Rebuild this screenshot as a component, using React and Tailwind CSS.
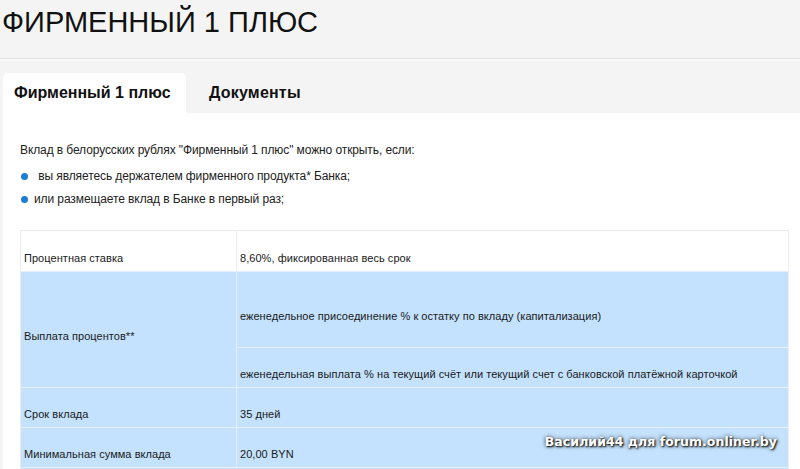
import React from "react";

const blue = "bg-[#c4e2fd]";

function Cell({ children, className = "" }) {
  return (
    <div className={`flex items-center pt-[14px] px-[3px] ${className}`}>
      {children}
    </div>
  );
}

export default function App() {
  return (
    <div className="w-[800px] h-[469px] overflow-hidden bg-[#f4f4f4] font-['Liberation_Sans',Arial,sans-serif] text-[#111]">
      {/* TITLE */}
      <div className="h-[58px] pl-[2px] pt-[6px]">
        <h1 className="text-[29px] leading-[32px] font-normal">ФИРМЕННЫЙ 1 ПЛЮС</h1>
      </div>
      <div className="h-px bg-[#e2e2e2]" />
      <div className="h-[2px] bg-[#f9f9f9]" />

      {/* TABS */}
      <div className="flex pl-[3px] mt-[12px] h-[40px] items-stretch">
        <div className="bg-white rounded-t-[5px] w-[183px] pl-[11px] flex items-center text-[16px] font-bold">
          Фирменный 1 плюс
        </div>
        <div className="pl-[23px] flex items-center text-[16px] font-bold tracking-[0.2px]">Документы</div>
      </div>

      {/* CONTENT */}
      <div className="ml-[3px] bg-white h-[400px] pl-[17px] pt-[29px] text-[12px] tracking-[-0.1px] text-[#222]">
        <p className="leading-[16px]">
          Вклад в белорусских рублях "Фирменный 1 плюс" можно открыть, если:
        </p>
        <ul className="mt-[10px]">
          <li className="flex items-center h-[16px]">
            <span className="w-[7px] h-[7px] rounded-full bg-[#1a7fd1] ml-[1px] mr-[7px]" />
            &nbsp;вы являетесь держателем фирменного продукта* Банка;
          </li>
          <li className="flex items-center h-[16px] mt-[7px]">
            <span className="w-[7px] h-[7px] rounded-full bg-[#1a7fd1] ml-[1px] mr-[6px]" />
            или размещаете вклад в Банке в первый раз;
          </li>
        </ul>

        {/* TABLE */}
        <div className="mt-[23px] w-[769px] text-[11px] tracking-[0.05px] text-[#1a1a1a] border border-[#ececec]">
          <div className="grid grid-cols-[216px_1fr] h-[40px]">
            <Cell className="border-r border-[#ececec]">Процентная ставка</Cell>
            <Cell>8,60%, фиксированная весь срок</Cell>
          </div>
          <div className={`grid grid-cols-[216px_1fr] ${blue} border-t border-[#e4f1fd]`}>
            <Cell className="border-r border-[#e4f1fd]">Выплата процентов**</Cell>
            <div className="flex flex-col">
              <Cell className="h-[75px]">
                еженедельное присоединение % к остатку по вкладу (капитализация)
              </Cell>
              <Cell className="h-[40px] border-t border-[#e4f1fd]">
                еженедельная выплата % на текущий счёт или текущий счет с банковской платёжной карточкой
              </Cell>
            </div>
          </div>
          <div className={`grid grid-cols-[216px_1fr] h-[40px] ${blue} border-t border-[#e4f1fd]`}>
            <Cell className="border-r border-[#e4f1fd]">Срок вклада</Cell>
            <Cell>35 дней</Cell>
          </div>
          <div className={`relative grid grid-cols-[216px_1fr] h-[40px] ${blue} border-t border-[#e4f1fd]`}>
            <Cell className="border-r border-[#e4f1fd]">Минимальная сумма вклада</Cell>
            <Cell>20,00 BYN</Cell>
            <span className="absolute right-[11px] top-[5px] text-[12.5px] font-bold text-white font-['DejaVu_Sans',Verdana,sans-serif] [text-shadow:1px_1px_2px_#000,0_0_4px_#333]">
              Василий44 для forum.onliner.by
            </span>
          </div>
          <div className={`h-[40px] ${blue} border-t border-[#e4f1fd]`} />
        </div>
      </div>
    </div>
  );
}
